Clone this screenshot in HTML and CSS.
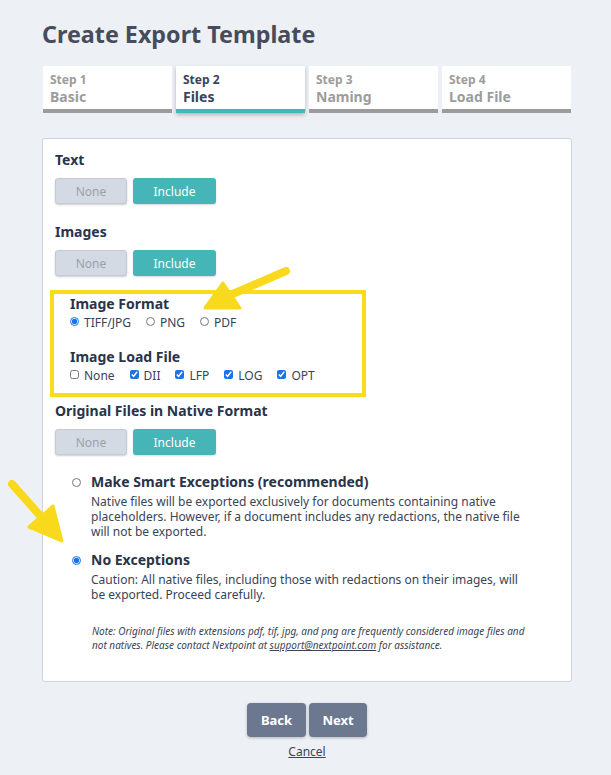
FILE: index.html
```html
<!DOCTYPE html>
<html lang="en">

<head>
    <meta charset="UTF-8">
    <meta name="viewport" content="width=device-width, initial-scale=1.0">
    <title>Create Export Template</title>
    <link rel="stylesheet" href="styles.css">
</head>

<body>
    <div class="page">
        <h1 class="title">Create Export Template</h1>

        <ul class="steps">
            <li class="step"><span class="step-num">Step 1</span><span class="step-name">Basic</span></li>
            <li class="step active"><span class="step-num">Step 2</span><span class="step-name">Files</span></li>
            <li class="step"><span class="step-num">Step 3</span><span class="step-name">Naming</span></li>
            <li class="step"><span class="step-num">Step 4</span><span class="step-name">Load File</span></li>
        </ul>

        <div class="card">
            <div class="field">
                <div class="field-label">Text</div>
                <div class="toggle">
                    <button class="btn-none">None</button>
                    <button class="btn-include">Include</button>
                </div>
            </div>

            <div class="field">
                <div class="field-label">Images</div>
                <div class="toggle">
                    <button class="btn-none">None</button>
                    <button class="btn-include">Include</button>
                </div>
            </div>

            <!-- image settings, marked out in yellow -->
            <div class="highlight">
                <div class="sub-label">Image Format</div>
                <div class="choices">
                    <label><input type="radio" name="format" checked>TIFF/JPG</label>
                    <label><input type="radio" name="format">PNG</label>
                    <label><input type="radio" name="format">PDF</label>
                </div>
                <div class="sub-label gap">Image Load File</div>
                <div class="choices">
                    <label><input type="checkbox">None</label>
                    <label><input type="checkbox" checked>DII</label>
                    <label><input type="checkbox" checked>LFP</label>
                    <label><input type="checkbox" checked>LOG</label>
                    <label><input type="checkbox" checked>OPT</label>
                </div>
            </div>

            <div class="field native">
                <div class="field-label">Original Files in Native Format</div>
                <div class="toggle">
                    <button class="btn-none">None</button>
                    <button class="btn-include">Include</button>
                </div>
            </div>

            <div class="option first">
                <input type="radio" name="native">
                <div>
                    <div class="option-title">Make Smart Exceptions (recommended)</div>
                    <p class="option-desc">Native files will be exported exclusively for documents containing native
                        placeholders. However, if a document includes any redactions, the native file will not be
                        exported.</p>
                </div>
            </div>

            <div class="option">
                <input type="radio" name="native" checked>
                <div>
                    <div class="option-title">No Exceptions</div>
                    <p class="option-desc">Caution: All native files, including those with redactions on their images,
                        will be exported. Proceed carefully.</p>
                </div>
            </div>

            <p class="note">Note: Original files with extensions pdf, tif, jpg, and png are frequently considered image
                files and not natives. Please contact Nextpoint at <a href="#">support@nextpoint.com</a> for
                assistance.</p>
        </div>

        <div class="actions">
            <div class="nav">
                <button class="btn-nav back">Back</button>
                <button class="btn-nav">Next</button>
            </div>
            <a class="cancel" href="#">Cancel</a>
        </div>
    </div>

    <!-- yellow pointer arrows -->
    <svg class="marks" width="611" height="775" viewBox="0 0 611 775">
        <g fill="#f9d91b" stroke="#f9d91b" stroke-linecap="round" stroke-linejoin="round">
            <path d="M286 271 L228 296" stroke-width="8" fill="none" />
            <path d="M205 308 L223 283 L240 308 Z" stroke-width="3" />
            <path d="M12 484 L44 520" stroke-width="8" fill="none" />
            <path d="M62 541 L53 506 L29 527 Z" stroke-width="3" />
        </g>
    </svg>
</body>

</html>
```

FILE: styles.css
```css
* {
    margin: 0;
    padding: 0;
    box-sizing: border-box;
}

body {
    position: relative;
    background: #edf1f5;
    font-family: "Noto Sans", "Open Sans", sans-serif;
    color: #2b354b;
}

.page {
    width: 572px;
    padding: 18px 0 0 42px;
}

.title {
    font-size: 23.3px;
    line-height: 32px;
    font-weight: 700;
    color: #474b5b;
}

/* wizard steps */
.steps {
    list-style: none;
    display: grid;
    grid-template-columns: repeat(4, 129px);
    gap: 4px;
    margin: 16px 0 0 1px;
}

.step {
    background: #fff;
    padding: 6px 7px 3px;
    border-bottom: 4px solid #9b9b9b;
    color: #9c9c9c;
    font-weight: 700;
}

.step-num {
    display: block;
    font-size: 12px;
    line-height: 16px;
}

.step-name {
    display: block;
    font-size: 14px;
    line-height: 18px;
}

.step.active {
    color: #38445c;
    border-bottom-color: #40b6b9;
    box-shadow: 0 2px 4px rgba(0, 0, 0, .25);
}

/* form card */
.card {
    margin-top: 25px;
    width: 530px;
    background: #fff;
    border: 1px solid #cfd4da;
    border-radius: 3px;
    padding: 11px 12px 29px;
}

.field + .field {
    margin-top: 18px;
}

.field-label {
    font-size: 14px;
    line-height: 20px;
    font-weight: 700;
    color: #29344b;
}

.toggle {
    display: flex;
    gap: 6px;
    margin-top: 8px;
}

.toggle button {
    height: 26px;
    font-family: "Noto Sans", sans-serif;
    font-size: 12px;
    border-radius: 3px;
}

.btn-none {
    width: 72px;
    background: #d3dae3;
    color: #9ba1a9;
    border: 1px solid #c4cbd4;
    box-shadow: 0 1px 2px rgba(0, 0, 0, .2);
}

.btn-include {
    width: 83px;
    background: #46b5b7;
    color: #fff;
    border: none;
    box-shadow: 0 1px 2px rgba(0, 0, 0, .15);
}

.highlight {
    margin: 14px 0 0 -5px;
    width: 316px;
    border: 4px solid #fbdc1b;
    padding: 1px 16px 9px;
}

.sub-label {
    font-size: 14px;
    line-height: 18px;
    font-weight: 700;
    color: #29344b;
}

.sub-label.gap {
    margin-top: 17px;
}

.choices {
    display: flex;
    gap: 15px;
    margin-top: 2px;
    font-size: 12px;
    line-height: 16px;
    color: #363f5e;
}

.choices label {
    display: flex;
    align-items: flex-start;
}

.choices input {
    width: 9px;
    height: 9px;
    margin: 2px 5px 0 0;
    accent-color: #1a73e8;
}

.field.native {
    margin-top: 4px;
}

/* native file exception choices */
.option {
    display: flex;
    gap: 10px;
    padding-left: 17px;
    margin-top: 11px;
}

.option.first {
    margin-top: 17px;
}

.option input {
    flex: none;
    width: 9px;
    height: 9px;
    margin-top: 6px;
    accent-color: #1a73e8;
}

.option-title {
    font-size: 14px;
    line-height: 20px;
    font-weight: 700;
    color: #29344b;
}

.option-desc {
    width: 438px;
    margin-top: 2px;
    font-size: 12px;
    line-height: 15px;
    color: #3a4457;
}

.note {
    width: 477px;
    margin-top: 22px;
    padding-left: 37px;
    font-size: 10px;
    line-height: 14px;
    font-style: italic;
    color: #3a4457;
}

.note a {
    color: inherit;
}

/* bottom buttons */
.actions {
    width: 530px;
    display: flex;
    flex-direction: column;
    align-items: center;
    margin-top: 21px;
}

.nav {
    display: flex;
    gap: 3px;
}

.btn-nav {
    width: 58px;
    height: 34px;
    border: none;
    border-radius: 4px;
    background: #6b7890;
    color: #fff;
    font-family: "Noto Sans", sans-serif;
    font-size: 13px;
    font-weight: 700;
    box-shadow: 0 1px 3px rgba(0, 0, 0, .25);
}

.btn-nav.back {
    width: 59px;
}

.cancel {
    margin-top: 7px;
    font-size: 12px;
    line-height: 16px;
    color: #3b4456;
}

.marks {
    position: absolute;
    top: 0;
    left: 0;
    pointer-events: none;
}
```
